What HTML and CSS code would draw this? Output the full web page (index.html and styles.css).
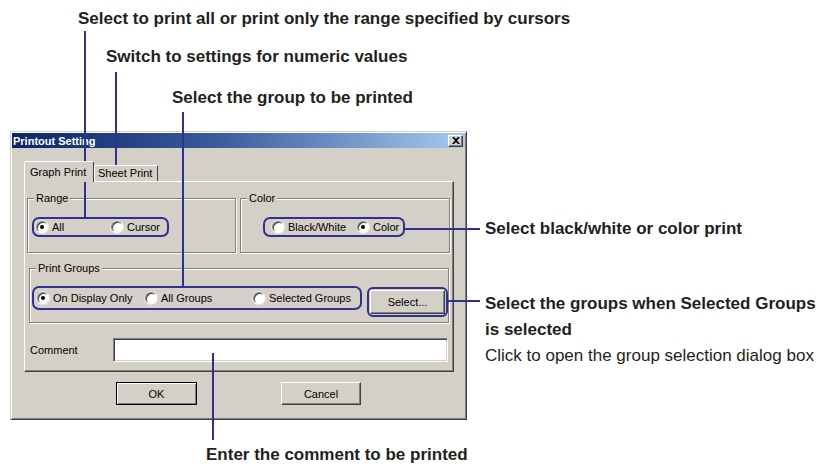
FILE: index.html
```html
<!DOCTYPE html>
<html lang="en">
<head>
  <meta charset="UTF-8">
  <title>Printout Setting</title>
  <link rel="stylesheet" href="styles.css">
</head>
<body>
<div class="sheet">
  <div class="dialog">
    <div class="titlebar">
      <span class="title">Printout Setting</span>
      <span class="close">
        <svg width="8" height="7" viewBox="0 0 8 7"><path d="M0 0h2l2 2 2-2h2L5 3.5 8 7H6L4 5 2 7H0l3-3.5z" fill="#000"/></svg>
      </span>
    </div>
    <div class="body">
      <div class="tabs">
        <span class="tab active">Graph Print</span>
        <span class="tab">Sheet Print</span>
      </div>
      <div class="panel">
        <div class="group-row">
          <div class="group range">
            <span class="legend">Range</span>
            <div class="callout range-opts">
              <label class="radio w75"><i class="dot on"></i>All</label>
              <label class="radio"><i class="dot"></i>Cursor</label>
            </div>
          </div>
          <div class="group color">
            <span class="legend">Color</span>
            <div class="callout color-opts">
              <label class="radio w85"><i class="dot"></i>Black/White</label>
              <label class="radio"><i class="dot on"></i>Color</label>
            </div>
          </div>
        </div>
        <div class="group groups">
          <span class="legend">Print Groups</span>
          <div class="groups-row">
            <div class="callout groups-opts">
              <label class="radio w108"><i class="dot on"></i>On Display Only</label>
              <label class="radio w108"><i class="dot"></i>All Groups</label>
              <label class="radio"><i class="dot"></i>Selected Groups</label>
            </div>
            <div class="callout select-wrap">
              <span class="btn select-btn">Select...</span>
            </div>
          </div>
        </div>
        <div class="comment-row">
          <span class="comment-label">Comment</span>
          <span class="input"></span>
        </div>
      </div>
      <div class="buttons">
        <span class="btn default">OK</span>
        <span class="btn">Cancel</span>
      </div>
    </div>
  </div>

  <!-- callout notes -->
  <div class="note n1">Select to print all or print only the range specified by cursors</div>
  <div class="note n2">Switch to settings for numeric values</div>
  <div class="note n3">Select the group to be printed</div>
  <div class="note n4">Select black/white or color print</div>
  <div class="note n5">Select the groups when Selected Groups<br>is selected<br><span class="plain">Click to open the group selection dialog box</span></div>
  <div class="note n6">Enter the comment to be printed</div>

  <span class="lead v l1"></span>
  <span class="lead v l2"></span>
  <span class="lead v l3"></span>
  <span class="lead h l4"></span>
  <span class="lead h l5"></span>
  <span class="lead v l6"></span>
</div>
</body>
</html>
```

FILE: styles.css
```css
html {
    --face: #d4d0c8;
    --shadow: #808080;
    --dark: #404040;
    --ink: #2e3192;
    --note: #231f20;
}

body {
    margin: 0;
    background: #fff;
}

.sheet {
    position: relative;
    width: 820px;
    height: 468px;
    overflow: hidden;
    padding-top: 131px;
    box-sizing: border-box;
}

/* dialog window */
.dialog {
    margin-left: 10px;
    width: 457px;
    height: 289px;
    box-sizing: border-box;
    padding: 1px;
    background: var(--face);
    border: 1px solid;
    border-color: var(--face) var(--dark) var(--dark) var(--face);
    box-shadow: inset 1px 1px #fff, inset -1px -1px var(--shadow);
    font-family: "Liberation Sans", Arial, sans-serif;
    font-size: 11px;
    color: #000;
}

.titlebar {
    height: 15px;
    display: flex;
    align-items: center;
    justify-content: space-between;
    padding: 0 2px 0 1px;
    background: linear-gradient(to right, #0a246a 0%, #3a5a9a 45%, #a6caf0 100%);
}
.title {
    color: #fff;
    font-weight: bold;
    font-size: 11px;
}
.close {
    width: 15px;
    height: 12px;
    box-sizing: border-box;
    display: flex;
    align-items: center;
    justify-content: center;
    background: var(--face);
    border: 1px solid;
    border-color: #fff var(--dark) var(--dark) #fff;
    box-shadow: inset -1px -1px var(--shadow);
}

.body {
    padding: 13px 11px 0 12px;
}

/* tabs */
.tabs {
    display: flex;
    align-items: flex-end;
    height: 20px;
    position: relative;
    z-index: 1;
}
.tab {
    box-sizing: border-box;
    height: 16px;
    padding: 0 5px 0 3px;
    line-height: 15px;
    background: var(--face);
    border: 1px solid;
    border-bottom: none;
    border-color: #fff var(--dark) transparent #fff;
    border-radius: 2px 2px 0 0;
}
.tab.active {
    height: 21px;
    width: 70px;
    padding: 3px 0 0 5px;
    margin-bottom: -1px;
    border-right-color: var(--dark);
}

.panel {
    box-sizing: border-box;
    height: 191px;
    padding: 0 3px 0 2px;
    border: 1px solid;
    border-color: #fff var(--dark) var(--dark) #fff;
    box-shadow: inset -1px -1px var(--shadow);
}

/* group boxes */
.group-row {
    display: flex;
    gap: 4px;
    margin-top: 16px;
}
.group {
    box-sizing: border-box;
    height: 55px;
    border: 1px solid var(--shadow);
    box-shadow: inset 1px 1px #fff, 1px 1px #fff;
}
.range { width: 209px; }
.color { width: 210px; }
.legend {
    display: block;
    width: fit-content;
    height: 13px;
    line-height: 13px;
    margin: -7px 0 0 6px;
    padding: 0 2px;
    background: var(--face);
}
.groups {
    margin: 15px 1px 0 2px;
}

/* blue callout frames around controls */
.callout {
    box-sizing: border-box;
    border: 2px solid var(--ink);
    border-radius: 7px;
    display: flex;
    align-items: center;
}
.range-opts {
    width: 137px;
    height: 20px;
    margin: 12px 0 0 4px;
    padding-left: 2px;
}
.color-opts {
    width: 142px;
    height: 20px;
    margin: 12px 0 0 22px;
    padding-left: 7px;
}
.groups-row {
    display: flex;
    align-items: flex-start;
    gap: 5px;
    margin: 11px 0 0 2px;
}
.groups-opts {
    width: 331px;
    height: 24px;
    padding-left: 3px;
}
.select-wrap {
    width: 81px;
    height: 30px;
    margin-top: 1px;
    padding: 1px;
    border-radius: 6px;
}

.radio {
    display: flex;
    align-items: center;
    white-space: nowrap;
}
.w75 { width: 75px; }
.w85 { width: 85px; }
.w108 { width: 108px; }
.dot {
    position: relative;
    width: 12px;
    height: 12px;
    box-sizing: border-box;
    margin-right: 4px;
    border-radius: 50%;
    background: #fff;
    border: 1px solid;
    border-color: var(--shadow) #fff #fff var(--shadow);
    box-shadow: inset 1px 1px #404040, 0 0 0 1px #e8e6e2;
}
.dot.on::after {
    content: "";
    position: absolute;
    left: 3px;
    top: 3px;
    width: 4px;
    height: 4px;
    border-radius: 50%;
    background: #000;
}

/* buttons */
.btn {
    box-sizing: border-box;
    display: flex;
    align-items: center;
    justify-content: center;
    background: var(--face);
    border: 1px solid;
    border-color: #fff var(--dark) var(--dark) #fff;
    box-shadow: inset -1px -1px var(--shadow);
}
.select-btn {
    width: 75px;
    height: 24px;
}
.buttons {
    display: flex;
    gap: 84px;
    margin-top: 10px;
    padding-left: 92px;
}
.buttons .btn {
    width: 80px;
    height: 23px;
}
.buttons .btn.default {
    width: 81px;
    border: 1px solid #000;
    box-shadow: inset 1px 1px #fff, inset -1px -1px var(--shadow);
}

/* comment */
.comment-row {
    display: flex;
    align-items: center;
    margin: 15px 0 0 3px;
}
.comment-label {
    width: 83px;
}
.input {
    box-sizing: border-box;
    width: 335px;
    height: 24px;
    background: #fff;
    border: 1px solid;
    border-color: var(--shadow) #fff #fff var(--shadow);
    box-shadow: inset 1px 1px var(--dark), inset -1px -1px var(--face);
}

/* annotation text */
.note {
    position: absolute;
    font-family: "Liberation Sans Narrow", "Liberation Sans", Arial, sans-serif;
    font-weight: bold;
    font-size: 17px;
    line-height: 20px;
    color: var(--note);
    white-space: nowrap;
}
.n1 { left: 78px; top: 9px; }
.n2 { left: 106px; top: 47px; }
.n3 { left: 172px; top: 88px; }
.n4 { left: 485px; top: 219px; }
.n5 { left: 485px; top: 291px; line-height: 26px; }
.n6 { left: 206px; top: 445px; }
.plain { font-weight: normal; }

/* leader lines */
.lead {
    position: absolute;
    background: var(--ink);
}
.lead.v { width: 2px; }
.lead.h { height: 2px; }
.l1 { left: 84px; top: 31px; height: 186px; }
.l2 { left: 115px; top: 72px; height: 104px; }
.l3 { left: 182px; top: 112px; height: 174px; }
.l4 { left: 404px; top: 228px; width: 76px; }
.l5 { left: 448px; top: 300px; width: 32px; }
.l6 { left: 212px; top: 353px; height: 87px; }
```
